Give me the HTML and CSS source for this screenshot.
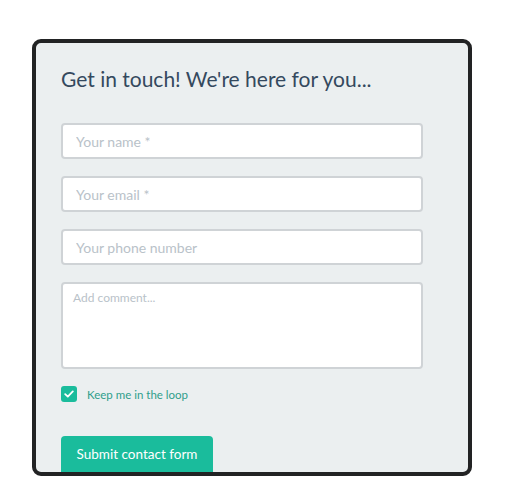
FILE: index.html
```html
<!DOCTYPE html>
<html>
<head>
<meta charset="utf-8">
<link rel="stylesheet" href="styles.css">
</head>
<body>
<div class="card">
  <h1 class="title">Get in touch! We're here for you...</h1>
  <form class="form">
    <input class="field" type="text" placeholder="Your name *">
    <input class="field" type="text" placeholder="Your email *">
    <input class="field" type="text" placeholder="Your phone number">
    <textarea class="comment" placeholder="Add comment..."></textarea>
    <label class="check">
      <span class="box"><svg width="10" height="8" viewBox="0 0 10 8"><path d="M1.2 4.2 L3.8 6.6 L8.8 1.4" fill="none" stroke="#fff" stroke-width="1.8" stroke-linecap="round" stroke-linejoin="round"/></svg></span>
      <span class="check-label">Keep me in the loop</span>
    </label>
    <button class="submit" type="button">Submit contact form</button>
  </form>
</div>
</body>
</html>
```

FILE: styles.css
```css
html, body {
  margin: 0;
  padding: 0;
  background: #ffffff;
}
body {
  padding: 39px 0 0 32px;
  font-family: Lato, "Open Sans", sans-serif;
}
.card {
  box-sizing: border-box;
  width: 440px;
  height: 437px;
  border: 4px solid #222324;
  border-radius: 9px;
  background: #ebeff0;
  padding: 0 0 0 25px;
  overflow: hidden;
}
.title {
  margin: 23px 0 0 0;
  font-size: 21px;
  line-height: 26px;
  font-weight: 400;
  color: #34495e;
}
.form {
  display: flex;
  flex-direction: column;
  align-items: flex-start;
  margin-top: 31px;
}
.field, .comment {
  box-sizing: border-box;
  width: 362px;
  border: 2px solid #cfd3d6;
  border-radius: 4px;
  background: #fff;
  font-family: Lato, sans-serif;
  color: #34495e;
  outline: none;
  margin: 0 0 17px 0;
}
.field {
  height: 36px;
  padding: 0 13px;
  font-size: 14px;
}
.comment {
  height: 87px;
  padding: 6px 10px;
  font-size: 12px;
  resize: none;
  display: block;
}
.field::placeholder, .comment::placeholder {
  color: #b9c2c9;
}
.check {
  display: flex;
  align-items: center;
  gap: 10px;
  margin-top: 0;
  height: 16px;
}
.box {
  width: 16px;
  height: 16px;
  border-radius: 3px;
  background: #1abc9c;
  display: flex;
  align-items: center;
  justify-content: center;
}
.check-label {
  font-size: 11.5px;
  color: #2f9e8b;
}
.submit {
  margin-top: 34px;
  width: 152px;
  height: 40px;
  border: none;
  border-radius: 4px;
  background: #1abc9c;
  color: #fff;
  font-family: Lato, sans-serif;
  font-size: 13.5px;
  padding: 0 0 4px 0;
}
```
